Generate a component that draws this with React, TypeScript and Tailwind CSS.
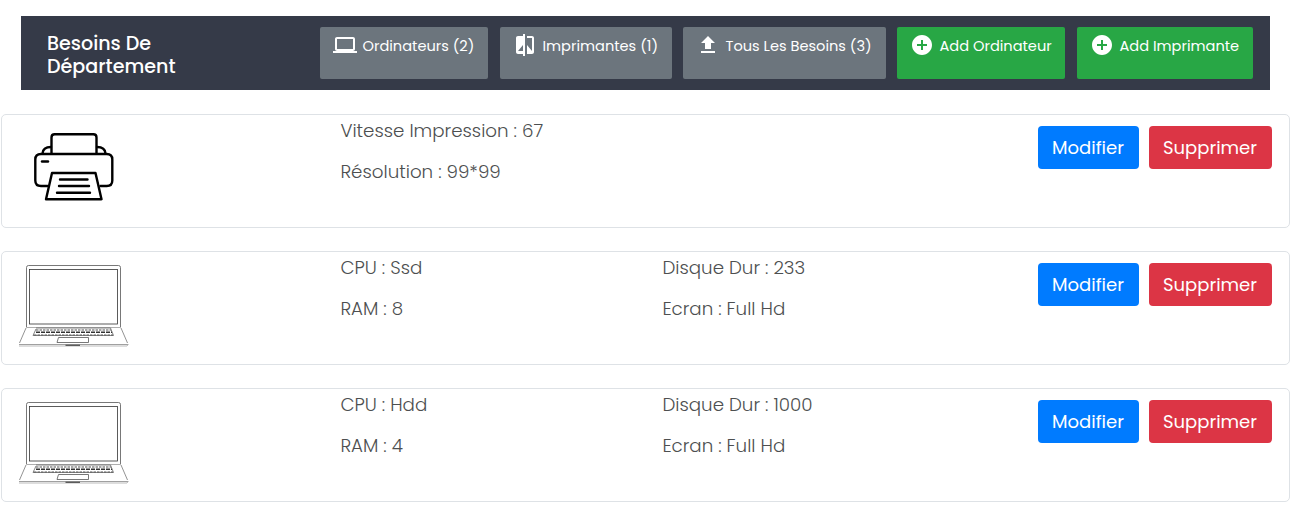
import type { ReactNode } from "react";
import { MdAddCircle, MdCompare, MdFileUpload, MdLaptop } from "react-icons/md";

function Printer() {
  return (
    <svg className="mt-[17px] ml-[30px] h-[72px] w-[84px]" viewBox="32 132 84 72" fill="none" stroke="#000" strokeWidth="2.4" strokeLinejoin="round" strokeLinecap="round">
      <path d="M51.5 153.500V137.500Q51.500 134.300 54.700 134.300H93.300Q96.500 134.300 96.500 137.500V153.500" />
      <path d="M42.500 153.500Q43 147 51 147M105.500 153.500Q105 147 97 147" />
      <path d="M47.500 186H41Q35.300 186 35.300 180.500V159.500Q35.300 154 41 154H106.700Q112.300 154 112.300 159.500V180.500Q112.300 186 106.700 186H100.500" />
      <path d="M42 161.500H48" />
      <path d="M52 173H95.500L101.500 199.200H46Z" />
      <path d="M60 179.500H87.500M59 186H89M57 192.800H90" />
    </svg>
  );
}

function Laptop() {
  return (
    <svg className="mt-3 ml-4 h-[85px] w-[112px]" viewBox="18 264 112 85" fill="none" stroke="#555" strokeWidth="0.8">
      <path d="M26.500 327.500V267.500Q26.500 265.500 28.500 265.500H118.500Q120.500 265.500 120.500 267.500V327.500" />
      <rect x="29.500" y="269.500" width="88" height="54.500" stroke="#333" />
      <path stroke="#999" d="M27 327.500H120" />
      <path d="M26 328L19.500 343M121 328L127.500 343" stroke="#777" />
      <path d="M19 344.500H128" stroke="#888" />
      <path d="M19 346H127L128.500 344" stroke="#aaa" />
      <path d="M65.500 345.300H80" stroke="#555" strokeWidth="1.300" />
      <path d="M36 328H110.500M36 329L33 335.500H113.500L110.500 328" stroke="#666" />
      <path d="M36 330H111M34 335H113" stroke="#555" strokeWidth="1.100" strokeDasharray="2.500 1" />
      <path d="M36 332.300H112" stroke="#333" strokeWidth="1.500" strokeDasharray="4 1" />
      <path d="M58.500 337.500H88.500V342.500H57Z" stroke="#555" />
    </svg>
  );
}

function HeaderButton({ icon, children, className }: { icon: ReactNode; children: ReactNode; className: string }) {
  return (
    <button className={`flex h-[52px] shrink-0 items-start rounded-[2px] pt-[6px] pl-[13px] text-[14.6px] leading-6 whitespace-nowrap text-white ${className}`}>
      {icon}
      <span className="pt-px pl-[5.5px]">{children}</span>
    </button>
  );
}

function Column({ lines, className }: { lines: string[]; className: string }) {
  return (
    <div className={`flex shrink-0 flex-col gap-[14px] pt-[2px] pl-[0.4px] text-[18.25px] leading-[27px] font-light whitespace-nowrap text-[#4d4f50] ${className}`}>
      {lines.map((line) => (
        <p key={line}>{line}</p>
      ))}
    </div>
  );
}

function Card({ picture, left, right }: { picture: ReactNode; left: string[]; right: string[] }) {
  return (
    <article className="flex h-[114px] w-[1289px] items-start rounded-[5px] border border-[#dee2e6] bg-white">
      <div className="w-[338px] shrink-0">{picture}</div>
      <Column lines={left} className="w-[322px]" />
      <Column lines={right} className="w-[376px]" />
      <div className="mt-[11px] flex shrink-0 gap-[10px] text-[18px] text-white">
        <button className="h-[43px] w-[101px] rounded-[4px] bg-[#007bff] pr-px">Modifier</button>
        <button className="h-[43px] w-[123px] rounded-[4px] bg-[#dc3545] pr-px">Supprimer</button>
      </div>
    </article>
  );
}

export default function App() {
  return (
    <main className="h-[516px] w-[1309px] overflow-hidden bg-white pt-4 font-['Poppins','Inter',sans-serif]">
      <header className="ml-[21px] flex h-[74px] w-[1249px] items-start bg-[#353a48] pt-[11px]">
        <h1 className="mt-[5px] w-[299px] shrink-0 pl-[26px] text-[19.1px] leading-[23px] font-medium text-white">
          Besoins De<br />Département
        </h1>
        <HeaderButton icon={<MdLaptop className="size-6" />} className="mr-3 w-[168px] bg-[#6c757d]">Ordinateurs (2)</HeaderButton>
        <HeaderButton icon={<MdCompare className="size-6" />} className="mr-[11px] w-[172px] bg-[#6c757d]">Imprimantes (1)</HeaderButton>
        <HeaderButton icon={<MdFileUpload className="size-6" />} className="mr-[11px] w-[203px] bg-[#6c757d]">Tous Les Besoins (3)</HeaderButton>
        <HeaderButton icon={<MdAddCircle className="size-6" />} className="mr-3 w-[168px] bg-[#28a745]">Add Ordinateur</HeaderButton>
        <HeaderButton icon={<MdAddCircle className="size-6" />} className="w-[176px] bg-[#28a745]">Add Imprimante</HeaderButton>
      </header>
      <section className="mt-6 ml-px flex flex-col gap-[23px]">
        <Card picture={<Printer />} left={["Vitesse Impression : 67", "Résolution : 99*99"]} right={[]} />
        <Card picture={<Laptop />} left={["CPU : Ssd", "RAM : 8"]} right={["Disque Dur : 233", "Ecran : Full Hd"]} />
        <Card picture={<Laptop />} left={["CPU : Hdd", "RAM : 4"]} right={["Disque Dur : 1000", "Ecran : Full Hd"]} />
      </section>
    </main>
  );
}
